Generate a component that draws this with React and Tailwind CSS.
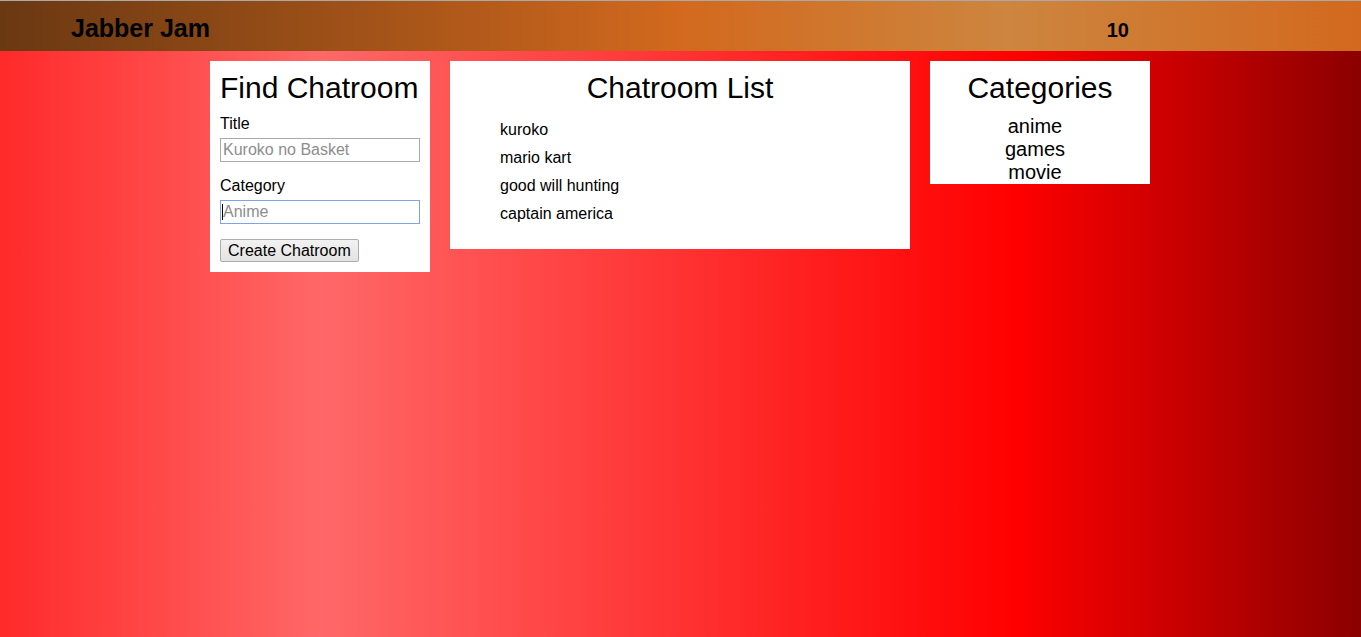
import { useState } from 'react';

const chatrooms = ['kuroko', 'mario kart', 'good will hunting', 'captain america'];
const categories = ['anime', 'games', 'movie'];

const App = () => {
  const [title, setTitle] = useState('');
  const [category, setCategory] = useState('');

  return (
    <div className="min-h-screen font-['Liberation_Sans',Arial,sans-serif] text-black bg-[linear-gradient(to_right,#ff2a2a_0%,#ff6868_23.6%,#ff0000_74.6%,#8b0000_100%)]">
      <header className="h-[51px] border-t border-[#aaaaaa] bg-[linear-gradient(to_right,#6a3812_0%,#d2691e_50%,#cd853f_74%,#d2691e_100%)]">
        <div className="flex items-start pl-[71px] pr-[232px] pt-[13px]">
          <h1 className="text-[25px] leading-[29px] font-bold">Jabber Jam</h1>
          <span className="ml-auto mt-[5px] text-[20px] leading-[23px] font-bold">10</span>
        </div>
      </header>

      <main className="flex items-start gap-[20px] pt-[10px] pl-[210px]">
        <section className="w-[220px] bg-white px-[10px] pt-[10px] pb-[10px]">
          <h2 className="text-[30px] leading-[34px] pb-[1px] whitespace-nowrap">Find Chatroom</h2>
          <label className="block mt-[9px] text-[16px] leading-[18px]">Title</label>
          <input
            type="text"
            value={title}
            onChange={(e) => setTitle(e.target.value)}
            placeholder="Kuroko no Basket"
            className="block mt-[5px] w-[200px] h-[24px] border border-[#a9a9a9] px-[2px] text-[16px] outline-none placeholder:text-[#8d8d8d]"
          />
          <label className="block mt-[15px] text-[16px] leading-[18px]">Category</label>
          <div className="relative mt-[5px] w-[200px]">
            <input
              type="text"
              value={category}
              onChange={(e) => setCategory(e.target.value)}
              placeholder="Anime"
              className="block w-[200px] h-[24px] border border-[#7ea4e6] px-[2px] text-[16px] outline-none placeholder:text-[#8d8d8d]"
            />
            {category === '' && (
              <span className="absolute left-[2px] top-[4px] w-px h-[16px] bg-black"></span>
            )}
          </div>
          <button className="block mt-[15px] h-[23px] px-[7px] border border-[#adadad] rounded-[2px] bg-[linear-gradient(to_bottom,#f2f2f2,#e3e3e3)] text-[16px] leading-[20px] whitespace-nowrap">
            Create Chatroom
          </button>
        </section>

        <section className="w-[460px] bg-white px-[10px] pt-[10px] pb-[10px]">
          <h2 className="text-[30px] leading-[34px] pb-[1px] text-center">Chatroom List</h2>
          <ul className="mt-[10px] mb-[11px] pl-[40px]">
            {chatrooms.map((room) => (
              <li key={room} className="h-[28px] py-[5px] text-[16px] leading-[18px]">{room}</li>
            ))}
          </ul>
        </section>

        <section className="w-[220px] bg-white px-[10px] pt-[10px]">
          <h2 className="text-[30px] leading-[34px] pb-[1px] text-center">Categories</h2>
          <ul className="mt-[9px] pr-[10px] text-center">
            {categories.map((c) => (
              <li key={c} className="text-[20px] leading-[23px]">{c}</li>
            ))}
          </ul>
        </section>
      </main>
    </div>
  );
};

export default App;
